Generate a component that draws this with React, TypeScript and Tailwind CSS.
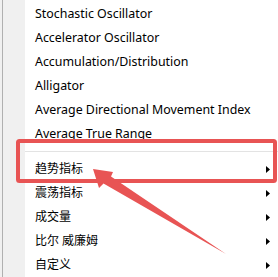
import { Fragment } from 'react'

const topItems = [
  'Stochastic Oscillator',
  'Accelerator Oscillator',
  'Accumulation/Distribution',
  'Alligator',
  'Average Directional Movement Index',
  'Average True Range',
]

const subMenus = ['趋势指标', '震荡指标', '成交量', '比尔 威廉姆', '自定义']

const font = { fontFamily: '"Noto Sans", "Noto Sans CJK SC", sans-serif' }

function SubArrow() {
  return (
    <svg width="4" height="7" viewBox="0 0 4 7" className="shrink-0">
      <path d="M0 0 L4 3.5 L0 7 Z" fill="#000" />
    </svg>
  )
}

export default function App() {
  return (
    <div
      className="relative flex w-[278px] h-[277px] overflow-hidden bg-white text-[12px] text-black"
      style={font}
    >
      {/* icon gutter */}
      <div className="w-[25px] shrink-0 bg-[#f0f0f0] border-l-[2px] border-[#f0f0f0]">
        <div className="w-px h-full bg-[#b0b0b0]" />
      </div>

      <div className="flex-1 flex flex-col pt-[2px]">
        {topItems.map((label) => (
          <div key={label} className="h-[24px] flex items-center pl-[10px] text-[12.4px]">
            {label}
          </div>
        ))}
        <div className="h-[11px] flex items-center">
          <div className="h-px w-full bg-[#e3e3e3]" />
        </div>
        {subMenus.map((label, i) => (
          <Fragment key={i}>
            <div className="h-[24px] flex items-center justify-between pl-[10px] pr-[8px]">
              <span>{label}</span>
              <SubArrow />
            </div>
          </Fragment>
        ))}
      </div>

      {/* annotation overlay */}
      <svg
        className="absolute inset-0 pointer-events-none"
        width="278"
        height="277"
        viewBox="0 0 278 277"
      >
        <rect
          x="18"
          y="141"
          width="257"
          height="40"
          rx="1.5"
          fill="none"
          stroke="#e85454"
          strokeWidth="4"
        />
        <polygon
          points="93,169 113,172 111,176.5 226,254 103.5,183.5 99,188"
          fill="#e85454"
        />
      </svg>
    </div>
  )
}
